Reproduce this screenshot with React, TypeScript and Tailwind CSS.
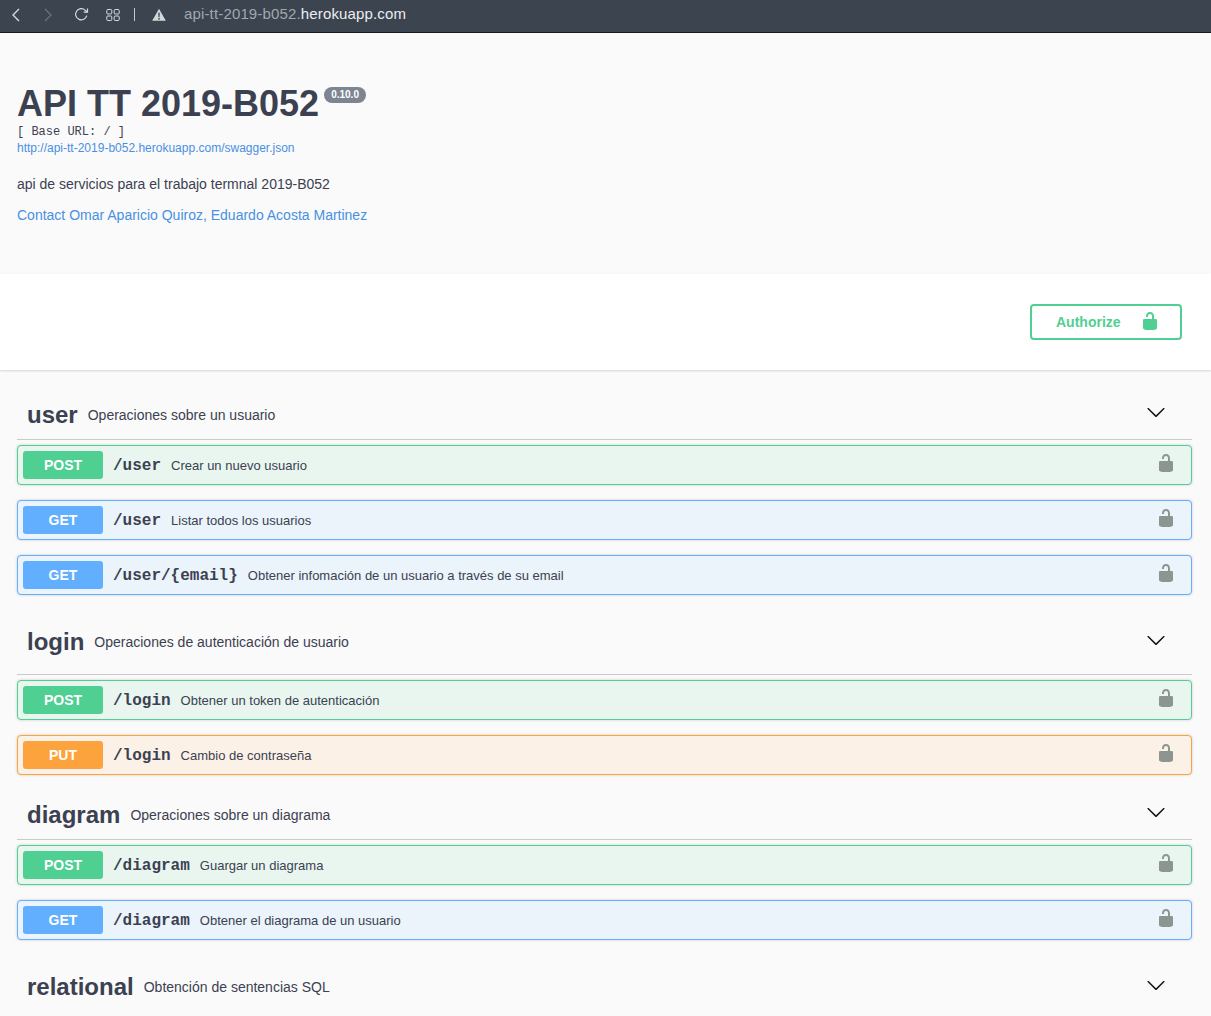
import React from "react";

const LOCK =
  "M15.8 8H14V5.6C14 2.703 12.665 1 10 1 7.334 1 6 2.703 6 5.6V6h2v-.801C8 3.754 8.797 3 10 3c1.203 0 2 .754 2 2.199V8H4c-.553 0-1 .646-1 1.199V17c0 .549.428 1.139.951 1.307l1.197.387C5.672 18.861 6.55 19 7.1 19h5.8c.549 0 1.428-.139 1.951-.307l1.196-.387c.524-.167.953-.757.953-1.306V9.199C17 8.646 16.352 8 15.8 8z";
const ARROW =
  "M17.418 6.109c.272-.268.709-.268.979 0s.271.701 0 .969l-7.908 7.83c-.27.268-.707.268-.979 0l-7.908-7.83c-.27-.268-.27-.701 0-.969.271-.268.709-.268.979 0L10 13.25l7.418-7.141z";

const Lock = ({ className }: { className?: string }) => (
  <svg viewBox="0 0 20 20" className={className} fill="currentColor">
    <path d={LOCK} />
  </svg>
);

type Method = "POST" | "GET" | "PUT";

const methodStyles: Record<Method, { box: string; badge: string }> = {
  POST: { box: "border-[#50cf92] bg-[#e9f6f0]", badge: "bg-[#50cf92]" },
  GET: { box: "border-[#61affe] bg-[#ebf3fb]", badge: "bg-[#61affe]" },
  PUT: { box: "border-[#fca33e] bg-[#fbf1e6]", badge: "bg-[#fca33e]" },
};

const Operation = ({ method, path, summary }: { method: Method; path: string; summary: string }) => {
  const s = methodStyles[method];
  return (
    <div className={`mb-[15px] flex h-10 items-center rounded border pl-[5px] pr-[15px] shadow-[0_0_3px_rgba(0,0,0,0.19)] ${s.box}`}>
      <div className={`flex h-7 w-20 items-center justify-center rounded-[3px] text-sm font-bold text-white ${s.badge}`}>
        {method}
      </div>
      <span className="ml-[10px] mt-[2px] font-['Liberation_Mono',monospace] text-base font-bold text-[#3b4151]">{path}</span>
      <span className="ml-[10px] mt-[2px] text-[13px] text-[#3b4151]">{summary}</span>
      <Lock className="mb-[4px] ml-auto h-5 w-5 text-[#8d9590]" />
    </div>
  );
};

const TagHeader = ({ name, desc, className }: { name: string; desc: string; className: string }) => (
  <div className={`flex items-center border-b border-[#c9cacc] pl-[10px] pr-[26px] ${className}`}>
    <span className="text-2xl font-bold text-[#3b4151]">{name}</span>
    <span className="ml-[10px] text-sm text-[#3b4151]">{desc}</span>
    <svg viewBox="0 0 20 20" className="mb-[5px] ml-auto h-5 w-5 text-[#111]" fill="currentColor">
      <path d={ARROW} />
    </svg>
  </div>
);

export default function App() {
  return (
    <div className="h-[1016px] w-[1211px] overflow-hidden bg-[#fafafa] font-['Liberation_Sans',sans-serif]">
      {/* browser toolbar */}
      <div className="flex h-[33px] items-center border-b border-[#15181c] bg-[#3b444f] pb-[3px] pl-[10px]">
        <svg viewBox="0 0 12 16" className="h-4 w-3 text-[#d9dcdf]" fill="none" stroke="currentColor" strokeWidth="1.4">
          <path d="M9 2 3 8l6 6" />
        </svg>
        <svg viewBox="0 0 12 16" className="ml-[20px] h-4 w-3 text-[#697079]" fill="none" stroke="currentColor" strokeWidth="1.4">
          <path d="m3 2 6 6-6 6" />
        </svg>
        <svg viewBox="0 0 16 16" className="ml-[20px] h-[15px] w-[15px] text-[#d9dcdf]" fill="none" stroke="currentColor" strokeWidth="1.3">
          <path d="M13.6 9.2A6 6 0 1 1 11.8 3.3L14 5.2M14.4 1.5v4h-4" />
        </svg>
        <svg viewBox="0 0 14 14" className="ml-[17px] h-[14px] w-[14px] text-[#d9dcdf]" fill="none" stroke="currentColor" strokeWidth="1">
          <rect x="0.8" y="1.5" width="5" height="4.5" rx="1" />
          <rect x="8.2" y="1.5" width="5" height="4.5" rx="1" />
          <rect x="0.8" y="8" width="5" height="4.5" rx="1" />
          <rect x="8.2" y="8" width="5" height="4.5" rx="1" />
        </svg>
        <div className="ml-[14px] h-[13px] w-px bg-[#c5c8cc]" />
        <svg viewBox="0 0 16 14" className="ml-[17px] h-[13px] w-[14px] text-[#d4d6d9]" fill="currentColor">
          <path fillRule="evenodd" d="M8 .5 15.8 14H.2L8 .5Zm-.9 4.6.3 5h1.2l.3-5H7.1Zm.9 5.8a1 1 0 1 0 0 2 1 1 0 0 0 0-2Z" />
        </svg>
        <div className="ml-[18px] text-[15px] tracking-[0.15px] text-[#a3a8ae]">
          api-tt-2019-b052.<span className="text-[#eceef0]">herokuapp.com</span>
        </div>
      </div>

      {/* info */}
      <div className="h-[241px] pl-[17px] pt-[50px]">
        <div className="flex items-start">
          <h1 className="text-[36px] leading-[41px] font-bold text-[#3b4151]">API TT 2019-B052</h1>
          <span className="ml-[5px] mt-[4px] rounded-[57px] bg-[#7d8492] px-[7px] py-[2px] text-[10px] leading-3 font-bold text-white">0.10.0</span>
        </div>
        <div className="mt-[1px] font-['Liberation_Mono',monospace] text-xs leading-[14px] text-[#3b4151]">[ Base URL: / ]</div>
        <div className="mt-[2px] text-xs leading-[14px] text-[#4990e2]">http://api-tt-2019-b052.herokuapp.com/swagger.json</div>
        <p className="mt-[21px] text-sm leading-[17px] text-[#3b4151]">api de servicios para el trabajo termnal 2019-B052</p>
        <p className="mt-[14px] text-sm leading-[17px] text-[#4990e2]">Contact Omar Aparicio Quiroz, Eduardo Acosta Martinez</p>
      </div>

      {/* authorize bar */}
      <div className="flex h-[96px] items-start justify-end bg-white pr-[29px] pt-[30px] shadow-[0_1px_2px_rgba(0,0,0,0.15)]">
        <button className="flex h-9 w-[152px] items-center rounded border-2 border-[#50cf92] bg-transparent pl-[24px] text-sm font-bold text-[#50cf92]">
          Authorize
          <Lock className="mb-[2px] ml-[19px] h-5 w-5" />
        </button>
      </div>

      {/* tags */}
      <div className="pl-[17px] pr-[19px]">
        <TagHeader name="user" desc="Operaciones sobre un usuario" className="mb-[5px] h-[70px] pt-[20px]" />
        <Operation method="POST" path="/user" summary="Crear un nuevo usuario" />
        <Operation method="GET" path="/user" summary="Listar todos los usuarios" />
        <Operation method="GET" path="/user/{email}" summary="Obtener infomación de un usuario a través de su email" />

        <TagHeader name="login" desc="Operaciones de autenticación de usuario" className="-mt-[15px] mb-[5px] h-[80px] pt-[15px]" />
        <Operation method="POST" path="/login" summary="Obtener un token de autenticación" />
        <Operation method="PUT" path="/login" summary="Cambio de contraseña" />

        <TagHeader name="diagram" desc="Operaciones sobre un diagrama" className="mb-[5px] h-[50px]" />
        <Operation method="POST" path="/diagram" summary="Guargar un diagrama" />
        <Operation method="GET" path="/diagram" summary="Obtener el diagrama de un usuario" />

        <TagHeader name="relational" desc="Obtención de sentencias SQL" className="h-[64px] border-b-0" />
      </div>
    </div>
  );
}
